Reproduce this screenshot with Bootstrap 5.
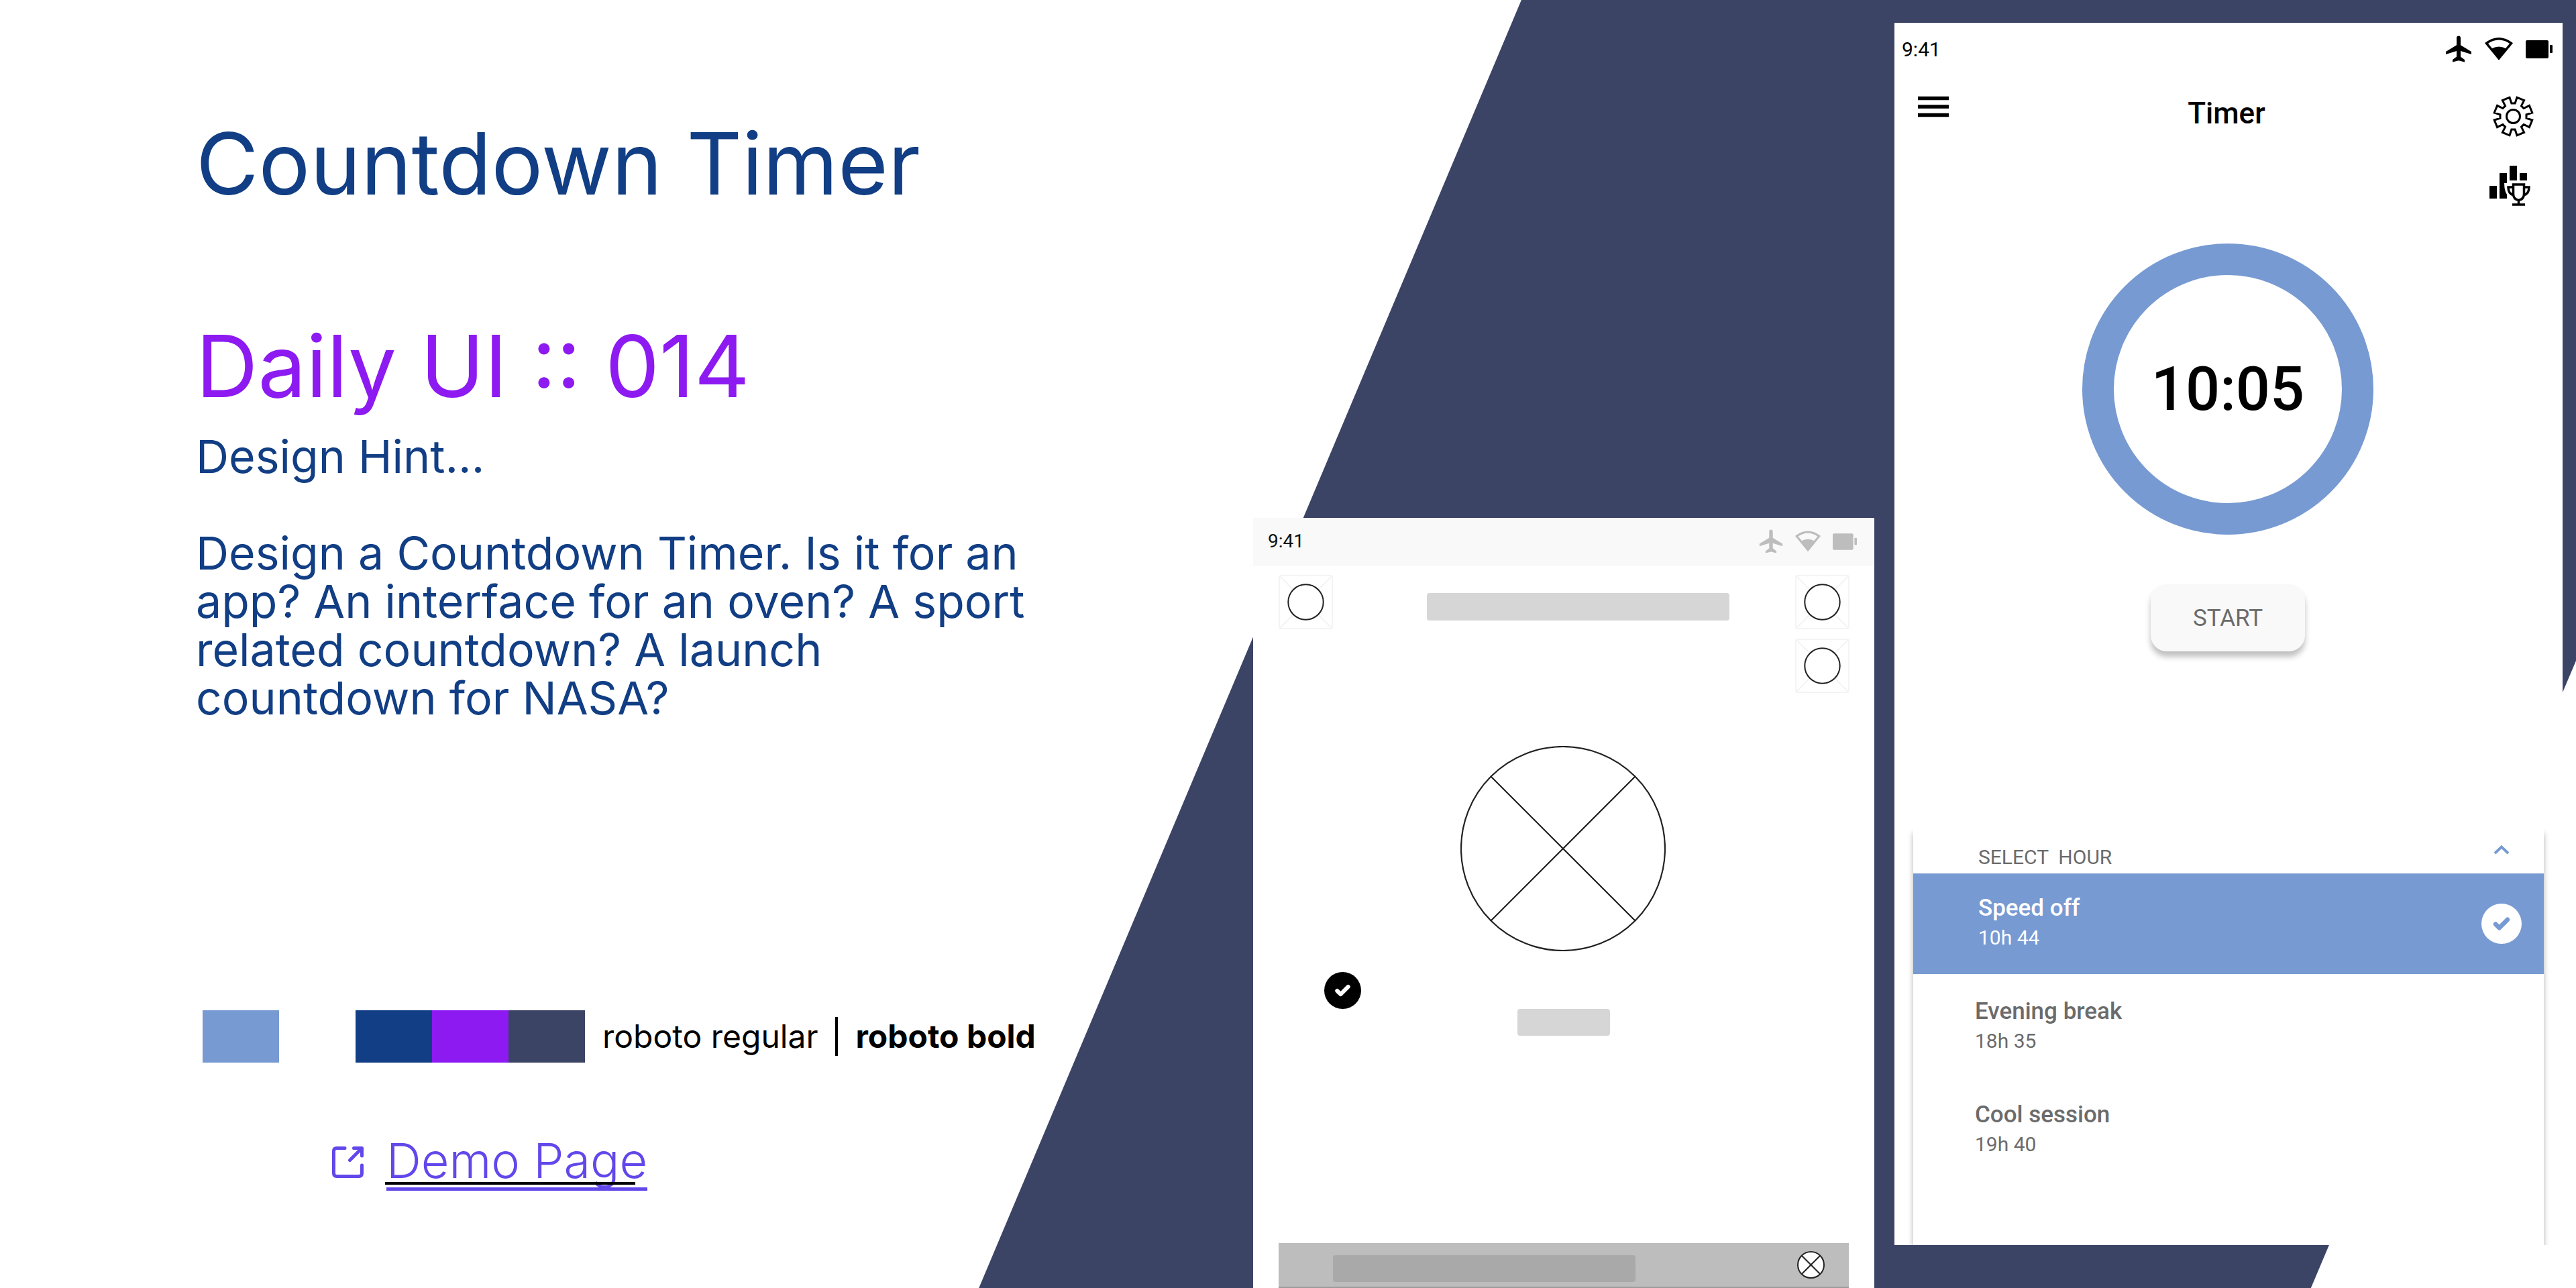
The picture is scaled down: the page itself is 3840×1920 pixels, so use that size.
<!DOCTYPE html>
<html lang="en">
<head>
<meta charset="utf-8">
<meta name="viewport" content="width=device-width, initial-scale=1">
<title>Countdown Timer – Daily UI 014</title>
<link href="https://cdn.jsdelivr.net/npm/bootstrap@5.3.0/dist/css/bootstrap.min.css" rel="stylesheet">
<style>
:root{--sky:#779ad2;--ink:#3c4465;--deep:#113e84;--violet:#8c1af1;--link:#6247ea;--gray:#6b6b6b}
body{font-family:Inter,sans-serif;background:#fff;color:#000}
svg{display:block;flex-shrink:0}
.stage{min-height:100vh;overflow:hidden}
.slant{inset:0;background:var(--ink);clip-path:polygon(59.06% 0,100% 0,100% 51.3%,89.71% 100%,38% 100%)}
.intro{padding:166px 0 0 292px;width:1600px;color:var(--deep)}
.intro h1,.intro h2{font-size:128px;line-height:156px;font-weight:400;margin:0}
.intro h2{color:var(--violet);margin-top:146px}
.hint{font-size:68px;line-height:72px;font-weight:400;max-width:1270px;margin-top:20px}
.hint p{margin:0 0 72px}
.swatches{margin:430px 0 0 10px;height:78px}
.swatch{width:114px;height:78px}
.swatch-sky{background:var(--sky)}
.swatch-deep{background:var(--deep)}
.swatch-violet{background:var(--violet)}
.swatch-ink{background:var(--ink)}
.type-note{margin-left:26px;gap:26px;font-size:48px;line-height:58px;color:#000;white-space:nowrap}
.type-rule{width:4px;height:58px;background:#000}
.demo{margin:106px 0 0 203px;gap:34px;color:var(--link);font-size:72px;line-height:80px;font-weight:300}
.demo-text{border-bottom:5px solid var(--link)}
.demo-text::after{content:"";position:absolute;left:-2px;right:18px;bottom:4px;height:4px;background:#000}
.phones{padding-right:20px;gap:30px}
.phone{font-family:Roboto,sans-serif;background:#fff}
.wire{width:926px;margin-top:772px}
.wire-status{height:72px;padding:0 26px 2px 22px;background:#f9f9f9;font-size:28px;color:#111}
.wire-icons{color:#bdbdbd;gap:18px}
.wire-head{padding:13px 37px 0 38px}
.wire-title{width:451px;height:41px;margin-top:27px;margin-left:140px;background:#d6d6d6;border-radius:4px}
.wire-side{gap:14px}
.wire-dial{margin:79px 0 0 309px}
.wire-check{margin:31px 0 0 106px}
.wire-btn{width:138px;height:40px;margin:0 auto;background:#d6d6d6;border-radius:4px}
.wire-foot{margin:309px 38px 0;height:67px;padding:0 36px 0 81px;background:#bdbdbd;border-bottom:2px solid #9c9c9c}
.wire-foot-bar{width:451px;height:40px;background:#a9a9a9;border-radius:4px;margin-top:10px}
.app{width:996px;height:1822px;margin-top:34px;overflow:hidden}
.app-status{height:78px;padding:0 15px 0 11px;font-size:30px}
.app-icons{gap:19px}
.app-head{padding:31px 43px 0 35px}
.icon-btn{border:0;background:none;padding:0;color:#000}
.menu-btn{width:68px}
.app-title{font-size:44px;line-height:52px;font-weight:500;margin:0}
.app-side{width:66px;gap:43px}
.app-body{padding-right:2px}
.ring{width:434px;height:434px;margin:55px auto 0;border:47px solid var(--sky);font-size:90px;font-weight:500}
.start{width:230px;height:100px;margin:74px auto 0;padding-top:4px;background:#f9f9f9;color:var(--gray);border:0;border-radius:24px;font-size:35px;box-shadow:0 8px 8px rgba(0,0,0,.25)}
.hours{width:940px;margin:263px auto 0;flex:1;box-shadow:0 8px 8px rgba(0,0,0,.3);color:var(--gray)}
.hours-head{height:68px;padding:26px 51px 0 97px;font-size:30px;line-height:36px}
.hours-head span{white-space:pre}
.hour{height:154px;padding:31px 33px 0 92px;background:none;border:0;color:inherit;text-align:left}
.hour.active{height:150px;padding-left:97px;margin-bottom:4px;background:var(--sky);color:#fff}
.hour-mark{margin-top:14px}
.hour-name{font-size:35px;line-height:42px;font-weight:500}
.hour-time{font-size:30px;line-height:46px}
</style>
</head>
<body>
<svg width="0" height="0" class="position-absolute" aria-hidden="true">
<symbol id="plane" viewBox="0 0 40 40"><path d="M20 .5c1.800 0 3 1.300 3 3v10.700l16 9.800v4L23 23v8.500l6 4.500v3.500l-9-2.300-9 2.300V36l6-4.500V23L1 28v-4l16-9.800V3.500c0-1.700 1.200-3 3-3z" fill="currentColor"/></symbol>
<symbol id="wifi" viewBox="0 0 42 34"><path d="M2.500 8.500Q21-5 39.500 8.500L21 31z" fill="none" stroke="currentColor" stroke-width="3.500"/><path d="M9 17q12-7 24 0L21 33z" fill="currentColor"/></symbol>
<symbol id="battery" viewBox="0 0 40 27"><rect width="34" height="27" rx="2" fill="currentColor"/><rect x="36" y="7" width="4" height="12" rx="1" fill="currentColor"/></symbol>
<symbol id="holder" viewBox="0 0 81 81"><rect x="1" y="1" width="79" height="79" rx="3" fill="#fff" stroke="#f4f4f4" stroke-width="2"/><path d="M1 1l79 79M80 1L1 80" stroke="#f4f4f4" stroke-width="2"/><circle cx="40.500" cy="40.500" r="26.200" fill="#fff" stroke="#222" stroke-width="2"/></symbol>
<symbol id="dial" viewBox="0 0 306 306"><circle cx="153" cy="153" r="152" fill="#fff" stroke="#222" stroke-width="2.200"/><path d="M45.500 45.500l215 215m0-215l-215 215" stroke="#222" stroke-width="2.200"/></symbol>
</svg>
<main class="stage position-relative d-flex justify-content-between">
<div class="slant position-absolute"></div>
<section class="intro position-relative">
<h1>Countdown Timer</h1>
<h2>Daily UI :: 014</h2>
<div class="hint"><p>Design Hint...</p><p class="mb-0">Design a Countdown Timer. Is it for an app? An interface for an oven? A sport related countdown? A launch countdown for NASA?</p></div>
<div class="swatches d-flex align-items-center">
<div class="swatch swatch-sky"></div><div class="swatch bg-white"></div><div class="swatch swatch-deep"></div><div class="swatch swatch-violet"></div><div class="swatch swatch-ink"></div>
<div class="type-note d-flex align-items-center"><span>roboto regular</span><div class="type-rule"></div><span class="fw-bold">roboto bold</span></div>
</div>
<div class="demo d-flex align-items-center">
<svg width="47" height="47" viewBox="0 0 47 47" fill="none" stroke="currentColor" stroke-width="5" stroke-linecap="round" stroke-linejoin="round"><path d="M19 2.500H7Q2.500 2.500 2.500 7v33q0 4.500 4.500 4.500h33q4.500 0 4.500-4.500V28M32.500 2.500h12v11.500M44 3L26.500 20.500"/></svg>
<a href="#" class="demo-text position-relative text-reset text-decoration-none">Demo Page</a>
</div>
</section>
<div class="phones position-relative d-flex">
<section class="phone wire" aria-label="Wireframe">
<div class="wire-status d-flex align-items-center justify-content-between"><span>9:41</span><div class="wire-icons d-flex align-items-center"><svg width="36" height="36"><use href="#plane"/></svg><svg width="38" height="32"><use href="#wifi"/></svg><svg width="36" height="25"><use href="#battery"/></svg></div></div>
<div class="wire-head d-flex align-items-start">
<svg width="81" height="81"><use href="#holder"/></svg>
<div class="wire-title"></div>
<div class="wire-side d-flex flex-column ms-auto"><svg width="81" height="81"><use href="#holder"/></svg><svg width="81" height="81"><use href="#holder"/></svg></div>
</div>
<svg class="wire-dial" width="306" height="306"><use href="#dial"/></svg>
<svg class="wire-check" width="55" height="55" viewBox="0 0 54 54"><circle cx="27" cy="27" r="27"/><path d="M19 27.500l5 5 11-11" fill="none" stroke="#fff" stroke-width="6" stroke-linecap="round" stroke-linejoin="round"/></svg>
<div class="wire-btn"></div>
<div class="wire-foot d-flex justify-content-between align-items-center"><div class="wire-foot-bar"></div><svg width="41" height="41" viewBox="0 0 41 41"><circle cx="20.500" cy="20.500" r="19.500" fill="#fff" stroke="#222" stroke-width="2"/><path d="M7 7l27 27M34 7L7 34" stroke="#222" stroke-width="2"/></svg></div>
</section>
<section class="phone app d-flex flex-column" aria-label="Timer app">
<div class="app-status d-flex align-items-center justify-content-between"><span>9:41</span><div class="app-icons d-flex align-items-center"><svg width="40" height="40"><use href="#plane"/></svg><svg width="42" height="34"><use href="#wifi"/></svg><svg width="40" height="27"><use href="#battery"/></svg></div></div>
<div class="app-head d-flex justify-content-between align-items-start">
<button class="icon-btn menu-btn" aria-label="Menu"><svg width="46" height="33" viewBox="0 0 46 33"><path d="M0 3.500h46M0 16h46M0 28.500h46" stroke="#000" stroke-width="5.500"/></svg></button>
<h3 class="app-title">Timer</h3>
<div class="app-side d-flex flex-column">
<button class="icon-btn align-self-end" aria-label="Settings"><svg width="61" height="61" viewBox="-30.500 -30.500 61 61" fill="none" stroke="#000" stroke-width="3"><polygon id="gear"/><circle r="10"/></svg></button>
<button class="icon-btn align-self-start" aria-label="Leaderboard"><svg width="61" height="61" viewBox="0 0 61 61"><path d="M0 30h11v19H0zM15 11h11v38H15zM30 0h11v22H30zM45 11h11v11H45z"/><path d="M22 26h40v30h-8l-6-4h-9l-9-4q-8-7-8-22z" fill="#fff"/><path d="M35.500 28h16v14q0 8-8 9.500-8-1.500-8-9.500zM35.500 32h-7.500q0 10 8 12M51.500 32H59q0 10-8 12M43.500 51v7M34 58h19" fill="none" stroke="#000" stroke-width="3.500"/></svg></button>
</div>
</div>
<div class="app-body d-flex flex-column">
<div class="ring rounded-circle d-flex align-items-center justify-content-center">10:05</div>
<button class="start">START</button>
</div>
<div class="hours d-flex flex-column">
<div class="hours-head d-flex align-items-start justify-content-between"><span>SELECT  HOUR</span><svg width="24" height="14" viewBox="0 0 24 14"><path d="M2 12L12 2.500 22 12" fill="none" stroke="#779ad2" stroke-width="4"/></svg></div>
<button class="hour active d-flex justify-content-between align-items-start"><span><span class="hour-name d-block">Speed off</span><span class="hour-time d-block">10h 44</span></span><svg class="hour-mark" width="60" height="60" viewBox="0 0 54 54"><circle cx="27" cy="27" r="27" fill="#fff"/><path d="M19 27.500l5 5 11-11" fill="none" stroke="#779ad2" stroke-width="6" stroke-linecap="round" stroke-linejoin="round"/></svg></button>
<button class="hour d-flex flex-column align-items-start"><span class="hour-name">Evening break</span><span class="hour-time">18h 35</span></button>
<button class="hour d-flex flex-column align-items-start"><span class="hour-name">Cool session</span><span class="hour-time">19h 40</span></button>
</div>
</section>
</div>
</main>
<script src="https://cdn.jsdelivr.net/npm/bootstrap@5.3.0/dist/js/bootstrap.bundle.min.js"></script>
<script>
// Build the eight-toothed gear outline from polar points.
const teeth=8,pts=[];
for(let i=0;i<teeth;i++){const c=(i+.5)*360/teeth;for(const [a,r] of [[-15,19.7],[-11.5,28.8],[11.5,28.8],[15,19.7]]){const t=(c+a)*Math.PI/180;pts.push((r*Math.sin(t)).toFixed(1)+','+(-r*Math.cos(t)).toFixed(1));}}
document.getElementById('gear').setAttribute('points',pts.join(' '));
</script>
</body>
</html>
